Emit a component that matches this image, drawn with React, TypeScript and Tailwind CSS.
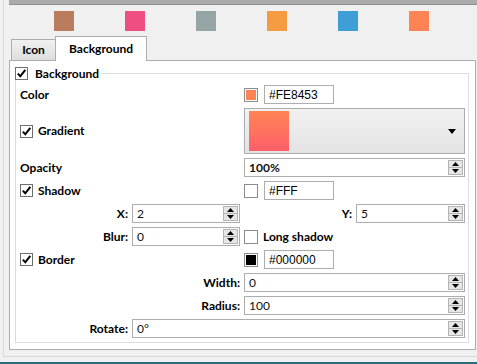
import React from 'react';

const swatches = ['#b97c5c', '#ef4f80', '#95a5a6', '#f59c42', '#3d9fd5', '#fe8453'];

function Check({ checked = true }: { checked?: boolean }) {
  return (
    <span className="flex h-[13px] w-[13px] shrink-0 items-center justify-center border border-[#6e6e6e] bg-white">
      {checked && (
        <svg width="11" height="11" viewBox="0 0 11 11">
          <path d="M1.8 5.6 L4.3 8.3 L9.3 1.8" fill="none" stroke="#000" strokeWidth="2" />
        </svg>
      )}
    </span>
  );
}

function SpinButtons() {
  return (
    <span className="flex h-[15px] w-[15px] shrink-0 flex-col border border-[#b4b4b4] bg-[#e6e6e6]">
      <span className="flex flex-1 items-center justify-center border-b border-[#b4b4b4]">
        <svg width="7" height="4" viewBox="0 0 7 4">
          <path d="M0 4 L3.5 0 L7 4 Z" fill="#000" />
        </svg>
      </span>
      <span className="flex flex-1 items-center justify-center">
        <svg width="7" height="4" viewBox="0 0 7 4">
          <path d="M0 0 L7 0 L3.5 4 Z" fill="#000" />
        </svg>
      </span>
    </span>
  );
}

function Spin({ value, bold = false, className = '' }: { value: string; bold?: boolean; className?: string }) {
  return (
    <div className={'flex h-[19px] items-center border border-[#adadad] bg-white pl-[4px] pr-[1px] ' + className}>
      <span className={'flex-1 text-[12px] leading-none text-[#111] ' + (bold ? 'font-bold' : 'font-normal')}>{value}</span>
      <SpinButtons />
    </div>
  );
}

function ColorField({ fill, value }: { fill: string | null; value: string }) {
  return (
    <div className="flex h-[19px] items-center">
      <span className="flex h-[14px] w-[14px] items-center justify-center border border-[#8c8c8c] bg-white">
        {fill && <span className="h-[10px] w-[10px]" style={{ background: fill }} />}
      </span>
      <div className="ml-[6px] flex h-[19px] w-[70px] items-center border border-[#adadad] bg-white pl-[4px] font-['Liberation_Sans',sans-serif] text-[12px] leading-none text-black">
        {value}
      </div>
    </div>
  );
}

function Label({ children, className = '' }: { children: React.ReactNode; className?: string }) {
  return <span className={'text-[12px] font-bold leading-none text-black ' + className}>{children}</span>;
}

export default function App() {
  return (
    <div className="flex h-[364px] w-[477px] flex-col overflow-hidden bg-[#f0f0f0] font-['Lato',sans-serif]">
      <div className="ml-[3px] border-b border-l border-[#d9d9d9] pb-[6px] pl-[5px]">
        <div className="h-[5px] border-b border-[#8d8d8d] bg-[#ababab]" />

        <div className="mt-[6px] flex gap-[51px] pl-[45px]">
          {swatches.map(c => (
            <span key={c} className="h-[20px] w-[20px]" style={{ background: c }} />
          ))}
        </div>

        <div className="mt-[5px] flex items-end pl-[2px]">
          <div className="flex h-[21px] w-[44px] items-center justify-center border-l border-t border-[#adadad] bg-gradient-to-b from-[#f0f0f0] to-[#dedede]">
            <Label>Icon</Label>
          </div>
          <div className="relative z-10 -mb-px flex h-[25px] w-[92px] items-center justify-center border-l border-r border-t border-[#adadad] bg-white pb-[1px]">
            <Label>Background</Label>
          </div>
        </div>

        <div className="mr-[1px] h-[290px] border border-[#adadad] bg-white pb-[6px] pl-[5px] pr-[6px] pt-[12px]">
          <div className="relative border border-[#dcdcdc] pb-[4px] pl-[4px] pr-[3px] pt-[11px]">
            <div className="absolute left-[-1px] top-[-7px] flex items-center gap-[7px] bg-white pr-[2px]">
              <Check />
              <Label>Background</Label>
            </div>

            <div className="flex flex-col gap-[4px]">
              <div className="grid grid-cols-[224px_221px] items-center">
                <Label>Color</Label>
                <ColorField fill="#fe8453" value="#FE8453" />
              </div>

              <div className="grid grid-cols-[224px_221px] items-center">
                <div className="flex items-center gap-[5px]">
                  <Check />
                  <Label>Gradient</Label>
                </div>
                <div className="flex h-[46px] items-center border border-[#adadad] bg-gradient-to-b from-[#f1f1f1] to-[#e4e4e4] pl-[4px] pr-[8px]">
                  <span className="h-[40px] w-[40px] bg-gradient-to-b from-[#fe8453] to-[#ff5e6a]" />
                  <span className="flex-1" />
                  <svg width="8" height="5" viewBox="0 0 8 5">
                    <path d="M0 0 L8 0 L4 5 Z" fill="#000" />
                  </svg>
                </div>
              </div>

              <div className="grid grid-cols-[224px_221px] items-center">
                <Label>Opacity</Label>
                <Spin value="100%" bold />
              </div>

              <div className="grid grid-cols-[224px_221px] items-center">
                <div className="flex items-center gap-[5px]">
                  <Check />
                  <Label>Shadow</Label>
                </div>
                <ColorField fill={null} value="#FFF" />
              </div>

              <div className="grid grid-cols-[224px_221px] items-center">
                <div className="flex items-center">
                  <Label className="w-[112px] pr-[4px] text-right">X:</Label>
                  <Spin value="2" className="w-[108px]" />
                </div>
                <div className="flex items-center">
                  <Label className="w-[112px] pr-[4px] text-right">Y:</Label>
                  <Spin value="5" className="w-[109px]" />
                </div>
              </div>

              <div className="grid grid-cols-[224px_221px] items-center">
                <div className="flex items-center">
                  <Label className="w-[112px] pr-[4px] text-right">Blur:</Label>
                  <Spin value="0" className="w-[108px]" />
                </div>
                <div className="flex items-center gap-[5px]">
                  <span className="h-[14px] w-[14px] border border-[#8c8c8c] bg-white" />
                  <Label>Long shadow</Label>
                </div>
              </div>

              <div className="grid grid-cols-[224px_221px] items-center">
                <div className="flex items-center gap-[5px]">
                  <Check />
                  <Label>Border</Label>
                </div>
                <ColorField fill="#000000" value="#000000" />
              </div>

              <div className="grid grid-cols-[224px_221px] items-center">
                <Label className="pr-[4px] text-right">Width:</Label>
                <Spin value="0" />
              </div>

              <div className="grid grid-cols-[224px_221px] items-center">
                <Label className="pr-[4px] text-right">Radius:</Label>
                <Spin value="100" />
              </div>

              <div className="flex items-center">
                <Label className="w-[112px] pr-[4px] text-right">Rotate:</Label>
                <Spin value="0°" className="flex-1" />
              </div>
            </div>
          </div>
        </div>
      </div>
      <div className="mt-auto h-[2px] bg-[#2d6a7b]" />
    </div>
  );
}
